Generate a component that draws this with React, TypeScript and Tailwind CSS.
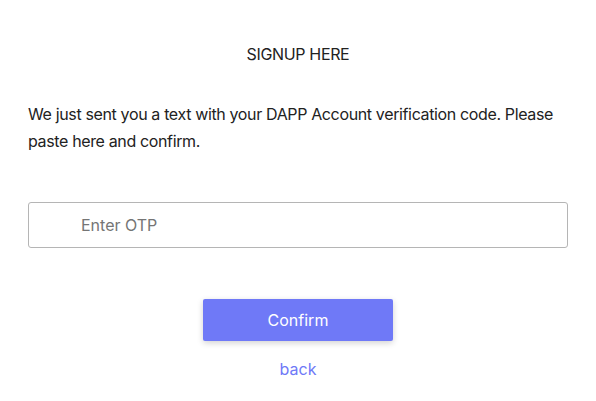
import React from "react";

export default function App() {
  return (
    <div className="min-h-[401px] w-full bg-white px-[28px] pt-[44px] text-[#222222]" style={{ fontFamily: "Inter, 'Noto Sans', sans-serif" }}>
      <h1 className="text-center text-[16px] font-normal leading-[20px] tracking-[-0.35px] text-[#222222]">SIGNUP HERE</h1>
      <p className="mt-[37px] text-[16px] leading-[27px] tracking-[-0.36px] text-[#222222]">
        We just sent you a text with your DAPP Account verification code. Please paste here and confirm.
      </p>
      <div className="mt-[47px]">
        <input
          type="text"
          placeholder="Enter OTP"
          className="block h-[46px] w-full rounded-[3px] border border-[#b5b5b5] pl-[52px] text-[16px] text-[#222] placeholder:text-[#757575] outline-none"
        />
      </div>
      <div className="mt-[51px] flex flex-col items-center">
        <button className="h-[42px] w-[190px] rounded-[2px] bg-[#6f79f7] text-[16px] text-white shadow-[0_2px_6px_rgba(0,0,0,0.18)]">
          Confirm
        </button>
        <a className="mt-[16px] text-[16px] leading-[24px] text-[#6f79f7]">back</a>
      </div>
    </div>
  );
}
